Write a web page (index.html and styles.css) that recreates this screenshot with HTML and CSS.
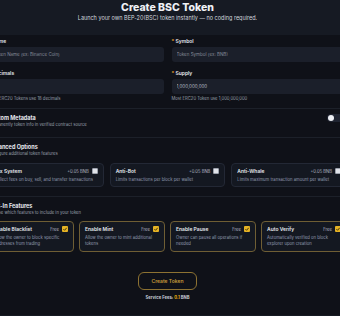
FILE: index.html
```html
<!DOCTYPE html>
<html lang="en">

<head>
    <meta charset="UTF-8">
    <meta name="viewport" content="width=device-width, initial-scale=1.0">
    <title>Create BSC Token</title>
    <link rel="stylesheet" href="styles.css">
</head>

<body>
    <div class="page">
        <!-- Nagłówek -->
        <div class="hero">
            <h1>Create BSC Token</h1>
            <p>Launch your own BEP-20(BSC) token instantly — no coding required.</p>
        </div>

        <div class="panel">
            <!-- Pola podstawowe -->
            <div class="fields">
                <div class="field">
                    <label class="label"><span class="req">*</span> Name</label>
                    <input class="field-input" type="text" placeholder="Token Name (ex: Binance Coin)">
                </div>
                <div class="field">
                    <label class="label"><span class="req">*</span> Symbol</label>
                    <input class="field-input" type="text" placeholder="Token Symbol (ex: BNB)">
                </div>
                <div class="field">
                    <label class="label"><span class="req">*</span> Decimals</label>
                    <input class="field-input" type="text" placeholder="">
                    <div class="help">Most ERC20 Tokens use 18 decimals</div>
                </div>
                <div class="field">
                    <label class="label"><span class="req">*</span> Supply</label>
                    <input class="field-input" type="text" value="1,000,000,000">
                    <div class="help">Most ERC20 Token use 1,000,000,000</div>
                </div>
            </div>

            <!-- Metadata -->
            <div class="section">
                <div class="section-head">
                    <div>
                        <h2>Custom Metadata</h2>
                        <p class="section-sub">Permanently token info in verified contract source</p>
                    </div>
                    <div class="toggle"><span class="knob"></span></div>
                </div>
            </div>

            <!-- Opcje zaawansowane -->
            <div class="section">
                <h2>Advanced Options</h2>
                <p class="section-sub">Configure additional token features</p>
                <div class="options">
                    <div class="card">
                        <div class="card-top">
                            <span class="card-title">Tax System</span>
                            <span class="card-meta">+0.05 BNB <span class="box"></span></span>
                        </div>
                        <div class="card-desc">Collect fees on buy, sell, and transfer transactions</div>
                    </div>
                    <div class="card">
                        <div class="card-top">
                            <span class="card-title">Anti-Bot</span>
                            <span class="card-meta">+0.05 BNB <span class="box"></span></span>
                        </div>
                        <div class="card-desc">Limits transactions per block per wallet</div>
                    </div>
                    <div class="card">
                        <div class="card-top">
                            <span class="card-title">Anti-Whale</span>
                            <span class="card-meta">+0.05 BNB <span class="box"></span></span>
                        </div>
                        <div class="card-desc">Limits maximum transaction amount per wallet</div>
                    </div>
                </div>
            </div>

            <!-- Funkcje wbudowane -->
            <div class="section last">
                <h2>Built-In Features</h2>
                <p class="section-sub">Choose which features to include in your token</p>
                <div class="features">
                    <div class="card gold">
                        <div class="card-top">
                            <span class="card-title">Enable Blacklist</span>
                            <span class="card-meta">Free <span class="box checked"><svg viewBox="0 0 6 6"><path d="M1.4 3.1 L2.6 4.3 L4.7 1.8"/></svg></span></span>
                        </div>
                        <div class="card-desc">Allow the owner to block specific addresses from trading</div>
                    </div>
                    <div class="card gold">
                        <div class="card-top">
                            <span class="card-title">Enable Mint</span>
                            <span class="card-meta">Free <span class="box checked"><svg viewBox="0 0 6 6"><path d="M1.4 3.1 L2.6 4.3 L4.7 1.8"/></svg></span></span>
                        </div>
                        <div class="card-desc">Allow the owner to mint additional tokens</div>
                    </div>
                    <div class="card gold">
                        <div class="card-top">
                            <span class="card-title">Enable Pause</span>
                            <span class="card-meta">Free <span class="box checked"><svg viewBox="0 0 6 6"><path d="M1.4 3.1 L2.6 4.3 L4.7 1.8"/></svg></span></span>
                        </div>
                        <div class="card-desc">Owner can pause all operations if needed</div>
                    </div>
                    <div class="card gold">
                        <div class="card-top">
                            <span class="card-title">Auto Verify</span>
                            <span class="card-meta">Free <span class="box checked"><svg viewBox="0 0 6 6"><path d="M1.4 3.1 L2.6 4.3 L4.7 1.8"/></svg></span></span>
                        </div>
                        <div class="card-desc">Automatically verified on block explorer upon creation</div>
                    </div>
                </div>
            </div>

            <!-- Przycisk -->
            <div class="submit">
                <button class="create-btn">Create Token</button>
                <div class="fees">Service Fees: <span class="gold-text">0.1</span> BNB</div>
            </div>
        </div>
    </div>
</body>

</html>
```

FILE: styles.css
```css
/* Styl dla całej strony */
body {
    margin: 0;
    padding: 0;
    background-color: #161a23;
    color: #e7e9ef;
    font-family: Inter, "Noto Sans", sans-serif;
    overflow: hidden;
}

/* Szeroki kontener, przycięty po bokach */
.page {
    margin: 0 -7px 0 -12px;
}

.hero {
    height: 33px;
    padding-top: 2px;
    text-align: center;
}

.hero h1 {
    margin: 0;
    font-size: 10.5px;
    line-height: 12px;
    font-weight: 800;
    color: #eef0f5;
}

.hero p {
    margin: 1px 0 0;
    font-size: 5.5px;
    line-height: 7px;
    color: #d2d6de;
}

/* Panel formularza */
.panel {
    background-color: #0f1118;
    padding: 3px 0 14px;
}

.fields {
    display: grid;
    grid-template-columns: 1fr 1fr;
    column-gap: 8px;
    row-gap: 8px;
}

.label {
    display: block;
    font-size: 5px;
    line-height: 7px;
    font-weight: 600;
    margin-bottom: 2px;
    color: #e2e5ec;
}

.req {
    color: #f0a92c;
}

.field-input {
    display: block;
    width: 100%;
    height: 15px;
    box-sizing: border-box;
    border: none;
    outline: none;
    border-radius: 3px;
    padding: 0 5px;
    background-color: #1b1f2a;
    color: #b9bec9;
    font-family: inherit;
    font-size: 4.5px;
}

.field-input::placeholder {
    color: #858b99;
}

.help {
    margin-top: 2px;
    font-size: 4.2px;
    line-height: 6px;
    color: #9aa0ad;
}

/* Sekcje */
.section {
    border-top: 1px solid #1c2029;
    margin-top: 6px;
    padding: 5px 0 9px;
}

.section + .section {
    margin-top: 0;
}

.section.last {
    padding-bottom: 0;
}

.section h2 {
    margin: 0;
    font-size: 5.5px;
    line-height: 8px;
    font-weight: 700;
    color: #e8eaf0;
}

.section-sub {
    margin: 0;
    font-size: 4.2px;
    line-height: 6px;
    color: #9aa0ad;
}

.section-head {
    display: flex;
    justify-content: space-between;
    align-items: flex-start;
}

.toggle {
    width: 18px;
    height: 8px;
    box-sizing: border-box;
    padding: 0 1px;
    margin-right: 2px;
    border-radius: 4px;
    background-color: #1f2431;
    display: flex;
    align-items: center;
}

.knob {
    width: 6px;
    height: 6px;
    border-radius: 50%;
    background-color: #eef0f5;
}

/* Karty */
.options {
    display: grid;
    grid-template-columns: repeat(3, 1fr);
    gap: 6px;
    margin-top: 6px;
}

.features {
    display: grid;
    grid-template-columns: repeat(4, 1fr);
    gap: 5px;
    margin-top: 5px;
}

.card {
    background-color: #141821;
    border: 1px solid #232835;
    border-radius: 4px;
    padding: 4px 5px 3px;
}

.card.gold {
    border-color: #6f5e34;
    padding-bottom: 4px;
}

.card-top {
    display: flex;
    justify-content: space-between;
    align-items: center;
    height: 6px;
}

.card-title {
    font-size: 5px;
    font-weight: 600;
    color: #e6e8ee;
    white-space: nowrap;
}

.card-meta {
    display: flex;
    align-items: center;
    gap: 3px;
    font-size: 4.2px;
    color: #b4b9c4;
    white-space: nowrap;
}

.box {
    width: 6px;
    height: 6px;
    box-sizing: border-box;
    border-radius: 1px;
    border: 0.7px solid #9ca1ac;
    background-color: #e1e3e9;
}

.box.checked {
    border: none;
    background-color: #e6b325;
}

.box svg {
    display: block;
    width: 6px;
    height: 6px;
}

.box path {
    fill: none;
    stroke: #3b2d06;
    stroke-width: 0.9;
}

.card-desc {
    margin-top: 3px;
    font-size: 4.2px;
    line-height: 6px;
    color: #939bb0;
}

/* Przycisk */
.submit {
    padding-top: 20px;
    text-align: center;
}

.create-btn {
    display: block;
    margin: 0 auto;
    width: 59px;
    height: 18px;
    border: 1px solid #8d7232;
    border-radius: 6px;
    background: transparent;
    color: #c49a3a;
    font-family: inherit;
    font-size: 5px;
    font-weight: 600;
}

.fees {
    margin-top: 5px;
    font-size: 4.2px;
    line-height: 6px;
    font-weight: 700;
    color: #c8ccd6;
}

.gold-text {
    color: #f0b90b;
}
```
